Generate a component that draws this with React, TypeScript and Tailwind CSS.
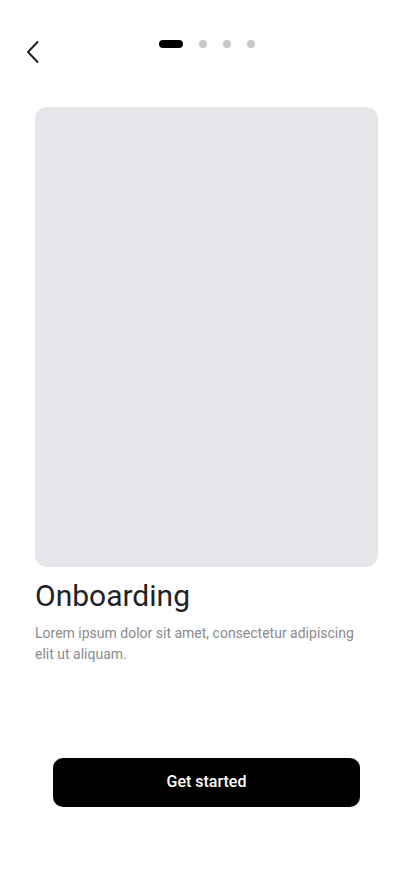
import React from "react";

export default function App() {
  return (
    <div className="w-[414px] h-[896px] bg-white flex flex-col" style={{ fontFamily: "Roboto, 'Liberation Sans', sans-serif" }}>
      <div className="relative h-[107px] shrink-0">
        <button className="absolute left-[22px] top-[38px] w-[22px] h-[28px] flex items-center justify-center">
          <svg width="14" height="24" viewBox="0 0 14 24" fill="none">
            <path d="M11.5 2 L2 12 L11.5 22" stroke="#1c1c1e" strokeWidth="1.9" strokeLinecap="round" strokeLinejoin="round" />
          </svg>
        </button>
        <div className="absolute left-[159px] top-[40px] flex items-center gap-4">
          <div className="w-6 h-2 rounded-full bg-black" />
          <div className="w-2 h-2 rounded-full bg-[#c7c7cc]" />
          <div className="w-2 h-2 rounded-full bg-[#c7c7cc]" />
          <div className="w-2 h-2 rounded-full bg-[#c7c7cc]" />
        </div>
      </div>
      <div className="px-[35px]">
        <div className="w-[343px] h-[460px] rounded-xl bg-[#e5e5ea]" />
        <h1 className="mt-[11px] text-[30px] leading-[36px] text-[#1f2328] font-normal">Onboarding</h1>
        <p className="mt-[9px] w-[330px] text-[14px] leading-[21px] text-[#8a8a8e]">
          Lorem ipsum dolor sit amet, consectetur adipiscing elit ut aliquam.
        </p>
      </div>
      <div className="flex mt-[93px] pl-[53px]">
        <button className="w-[307px] h-[49px] pb-[2px] rounded-[10px] bg-black text-white text-[16px] font-medium">Get started</button>
      </div>
    </div>
  );
}
